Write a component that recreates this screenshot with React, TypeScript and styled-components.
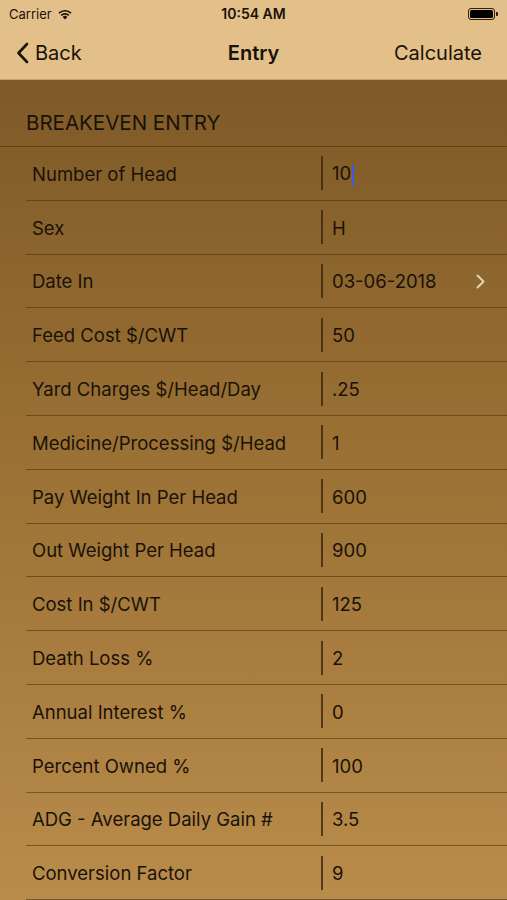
import React from 'react';
import styled, { createGlobalStyle } from 'styled-components';

const GlobalStyle = createGlobalStyle`
  html, body {
    margin: 0;
    padding: 0;
    background: #e3bf8a;
  }
  * { box-sizing: border-box; }
`;

interface Field {
  label: string;
  value: string;
  chevron?: boolean;
  cursor?: boolean;
}

const fields: Field[] = [
  { label: 'Number of Head', value: '10', cursor: true },
  { label: 'Sex', value: 'H' },
  { label: 'Date In', value: '03-06-2018', chevron: true },
  { label: 'Feed Cost $/CWT', value: '50' },
  { label: 'Yard Charges $/Head/Day', value: '.25' },
  { label: 'Medicine/Processing $/Head', value: '1' },
  { label: 'Pay Weight In Per Head', value: '600' },
  { label: 'Out Weight Per Head', value: '900' },
  { label: 'Cost In $/CWT', value: '125' },
  { label: 'Death Loss %', value: '2' },
  { label: 'Annual Interest %', value: '0' },
  { label: 'Percent Owned %', value: '100' },
  { label: 'ADG - Average Daily Gain #', value: '3.5' },
  { label: 'Conversion Factor', value: '9' },
];

const Screen = styled.div`
  width: 507px;
  height: 900px;
  overflow: hidden;
  display: flex;
  flex-direction: column;
  font-family: Inter, "Noto Sans", sans-serif;
  color: #1a1208;
`;

const TopBar = styled.div`
  background: #e3bf8a;
  border-bottom: 1px solid #c9a06a;
`;

const StatusBar = styled.div`
  height: 27px;
  display: grid;
  grid-template-columns: 1fr auto 1fr;
  align-items: center;
  padding: 0 9px;
  font-size: 13px;
`;

const Carrier = styled.div`
  display: flex;
  align-items: center;
  gap: 5px;
`;

const Clock = styled.div`
  font-weight: 600;
  font-size: 14px;
`;

const Battery = styled.div`
  justify-self: end;
  display: flex;
  align-items: center;
  gap: 1px;
`;

const BatteryBody = styled.div`
  width: 27px;
  height: 12px;
  border: 1px solid #2a2012;
  border-radius: 3px;
  padding: 1px;
  &::after {
    content: '';
    display: block;
    height: 100%;
    background: #000;
    border-radius: 1.5px;
  }
`;

const BatteryTip = styled.div`
  width: 2px;
  height: 4px;
  background: #2a2012;
  border-radius: 0 1px 1px 0;
`;

const NavBar = styled.div`
  height: 52px;
  display: grid;
  grid-template-columns: 1fr auto 1fr;
  align-items: center;
  padding: 0 16px;
  font-size: 20px;
`;

const BackButton = styled.div`
  display: flex;
  align-items: center;
  gap: 6px;
`;

const Title = styled.div`
  font-weight: 600;
`;

const Action = styled.div`
  justify-self: end;
  padding-right: 9px;
`;

const Content = styled.div`
  flex: 1;
  background: linear-gradient(180deg, #7e5a27 0%, #9a7034 45%, #b98c4b 100%);
`;

const SectionHeader = styled.div`
  height: 67px;
  padding: 30px 0 0 26px;
  font-size: 20.5px;
  border-bottom: 1px solid rgba(70, 45, 12, 0.55);
`;

const Row = styled.div`
  height: 53.8px;
  margin-left: 26px;
  display: grid;
  grid-template-columns: 295px 1px 1fr;
  align-items: center;
  border-bottom: 1px solid rgba(70, 45, 12, 0.55);
  font-size: 18.5px;
`;

const Label = styled.div`
  padding-left: 6px;
  padding-top: 1px;
`;

const Divider = styled.div`
  width: 1.5px;
  height: 34px;
  background: rgba(60, 38, 10, 0.8);
`;

const Value = styled.div`
  padding-left: 10px;
  padding-right: 22px;
  padding-top: 1px;
  display: flex;
  align-items: center;
  justify-content: space-between;
`;

const Cursor = styled.span`
  display: inline-block;
  width: 2px;
  height: 22px;
  background: #3d5bd8;
  vertical-align: middle;
  margin-left: 1px;
`;

const App: React.FC = () => (
  <Screen>
    <GlobalStyle />
    <TopBar>
      <StatusBar>
        <Carrier>
          Carrier
          <svg width="16" height="12" viewBox="0 0 16 12">
            <path d="M8 11.5 L5.6 8.9 A3.4 3.4 0 0 1 10.4 8.9 Z" fill="#1a1208" />
            <path d="M3.6 6.8 A6.3 6.3 0 0 1 12.4 6.8 L11.2 8 A4.6 4.6 0 0 0 4.8 8 Z" fill="#1a1208" />
            <path d="M1.4 4.6 A9.4 9.4 0 0 1 14.6 4.6 L13.4 5.8 A7.7 7.7 0 0 0 2.6 5.8 Z" fill="#1a1208" />
          </svg>
        </Carrier>
        <Clock>10:54 AM</Clock>
        <Battery>
          <BatteryBody />
          <BatteryTip />
        </Battery>
      </StatusBar>
      <NavBar>
        <BackButton>
          <svg width="13" height="22" viewBox="0 0 13 22">
            <path d="M11 2 L2.5 11 L11 20" fill="none" stroke="#1a1208" strokeWidth="2.6" strokeLinecap="round" strokeLinejoin="round" />
          </svg>
          Back
        </BackButton>
        <Title>Entry</Title>
        <Action>Calculate</Action>
      </NavBar>
    </TopBar>
    <Content>
      <SectionHeader>BREAKEVEN ENTRY</SectionHeader>
      {fields.map((f) => (
        <Row key={f.label}>
          <Label>{f.label}</Label>
          <Divider />
          <Value>
            <span>
              {f.value}
              {f.cursor && <Cursor />}
            </span>
            {f.chevron && (
              <svg width="9" height="15" viewBox="0 0 9 15">
                <path d="M1.5 1.5 L7.5 7.5 L1.5 13.5" fill="none" stroke="#e6d2b0" strokeWidth="2" strokeLinecap="round" strokeLinejoin="round" />
              </svg>
            )}
          </Value>
        </Row>
      ))}
    </Content>
  </Screen>
);

export default App;
